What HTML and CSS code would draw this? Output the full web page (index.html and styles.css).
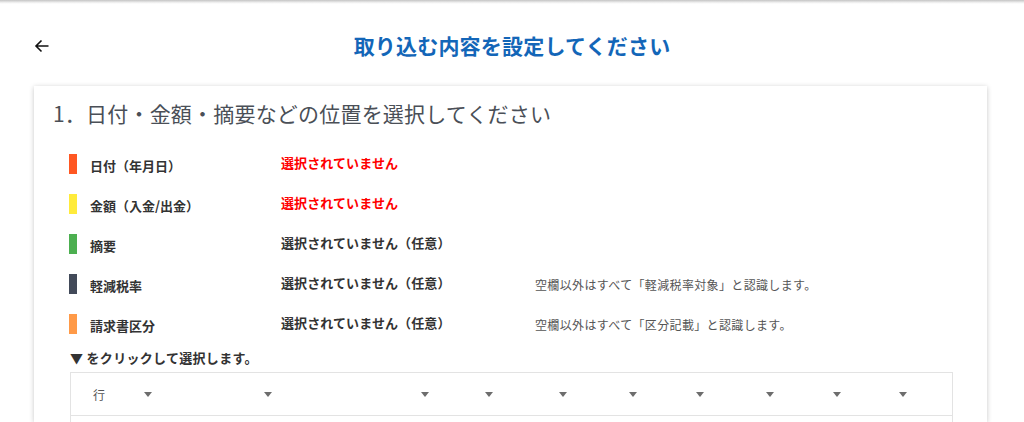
FILE: index.html
```html
<!DOCTYPE html>
<html>
<head>
    <meta charset="UTF-8">
    <title>取り込む内容を設定</title>
    <link rel="stylesheet" href="styles.css">
</head>
<body>
<div class="shade"></div>
<header class="head">
    <a class="back" href="#">
        <svg width="16" height="16" viewBox="0 0 16 16"><path d="M14.5 8H2M7.5 2.5L2 8l5.5 5.5" fill="none" stroke="#111" stroke-width="1.6"/></svg>
    </a>
    <h1 class="title">取り込む内容を設定してください</h1>
    <span></span>
</header>
<main class="card">
    <h2 class="step">1．日付・金額・摘要などの位置を選択してください</h2>
    <ul class="fields">
        <li><i class="bar date"></i><span class="name">日付（年月日）</span><span class="val must">選択されていません</span></li>
        <li><i class="bar amount"></i><span class="name">金額（入金/出金）</span><span class="val must">選択されていません</span></li>
        <li><i class="bar memo"></i><span class="name">摘要</span><span class="val">選択されていません（任意）</span></li>
        <li><i class="bar tax"></i><span class="name">軽減税率</span><span class="val">選択されていません（任意）</span><span class="note">空欄以外はすべて「軽減税率対象」と認識します。</span></li>
        <li><i class="bar bill"></i><span class="name">請求書区分</span><span class="val">選択されていません（任意）</span><span class="note">空欄以外はすべて「区分記載」と認識します。</span></li>
    </ul>
    <p class="hint">▼ をクリックして選択します。</p>
    <div class="grid">
        <div class="row headrow">
            <span class="cell num">行</span>
            <span class="cell"><b class="caret"></b></span>
            <span class="cell"><b class="caret"></b></span>
            <span class="cell"><b class="caret"></b></span>
            <span class="cell"><b class="caret"></b></span>
            <span class="cell"><b class="caret"></b></span>
            <span class="cell"><b class="caret"></b></span>
            <span class="cell"><b class="caret"></b></span>
            <span class="cell"><b class="caret"></b></span>
            <span class="cell"><b class="caret"></b></span>
            <span class="cell"><b class="caret"></b></span>
            <span class="cell"></span>
        </div>
        <div class="row"></div>
    </div>
</main>
</body>
</html>
```

FILE: styles.css
```css
* {
    margin: 0;
    padding: 0;
    list-style: none;
    box-sizing: border-box;
}

body {
    background: #FFFFFF;
    font-family: "Noto Sans CJK JP", "Noto Sans", sans-serif;
    color: #333;
}

.shade {
    height: 4px;
    background: linear-gradient(#c4c4c4, #f4f4f4 70%, #fff);
}

.head {
    height: 82px;
    display: grid;
    grid-template-columns: 1fr auto 1fr;
    align-items: center;
    padding: 0 34px;
}
.back {
    display: flex;
    width: 16px;
    margin-top: 2px;
}
.title {
    font-size: 21px;
    font-weight: bold;
    color: #1366b8;
    line-height: 30px;
    letter-spacing: .2px;
}

.card {
    width: 953px;
    height: 336px;
    margin-left: 34px;
    padding: 12px 0 0 0;
    overflow: hidden;
    box-shadow: 0 1px 5px rgba(0, 0, 0, .22);
}
.step {
    font-size: 21px;
    font-weight: normal;
    color: #4a4f57;
    line-height: 30px;
    padding-left: 19px;
    letter-spacing: .2px;
}

.fields {
    margin-top: 16px;
    padding-left: 35px;
}
.fields > li {
    height: 40px;
    display: flex;
    align-items: center;
}
.bar {
    width: 8px;
    height: 20px;
    margin-right: 13px;
}
.bar.date { background: #ff5722; }
.bar.amount { background: #ffeb3b; }
.bar.memo { background: #4caf50; }
.bar.tax { background: #424a59; }
.bar.bill { background: #ff9a48; }

.name {
    width: 191px;
    font-size: 13px;
    font-weight: bold;
    margin-top: 3px;
}
.val {
    width: 254px;
    font-size: 13px;
    font-weight: bold;
    margin-top: -3px;
    letter-spacing: .1px;
}
.val.must {
    color: #ff0000;
}
.note {
    font-size: 12px;
    color: #555;
    letter-spacing: .35px;
}

.hint {
    margin: 4px 0 0 36px;
    font-size: 13px;
    font-weight: bold;
    line-height: 20px;
    letter-spacing: .3px;
}

.grid {
    width: 883px;
    margin: 4px 0 0 36px;
    border: 1px solid #e3e3e3;
}
.row {
    height: 42px;
    display: grid;
    grid-template-columns: 50px 43px 120px 157px 64px 74px 70px 67px 70px 67px 66px 1fr;
}
.row + .row {
    border-top: 1px solid #e3e3e3;
}
.cell {
    display: flex;
    align-items: center;
    justify-content: flex-end;
    padding-right: 12px;
}
.cell.num {
    justify-content: flex-start;
    padding-left: 22px;
    font-size: 12px;
    color: #555;
}
.caret {
    width: 0;
    height: 0;
    border-left: 4px solid transparent;
    border-right: 4px solid transparent;
    border-top: 5px solid #6d6d6d;
}
```
